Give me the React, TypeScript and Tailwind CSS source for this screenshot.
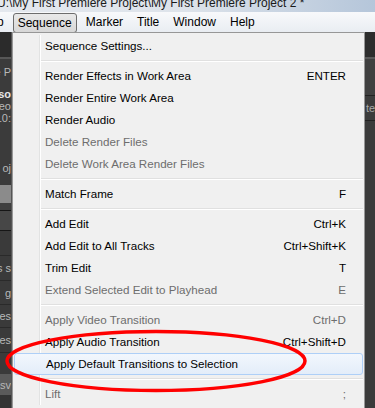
import React from "react";

type Item =
  | { sep: true }
  | { label: string; keys?: string; off?: boolean; hot?: boolean };

const items: Item[] = [
  { label: "Sequence Settings..." },
  { sep: true },
  { label: "Render Effects in Work Area", keys: "ENTER" },
  { label: "Render Entire Work Area" },
  { label: "Render Audio" },
  { label: "Delete Render Files", off: true },
  { label: "Delete Work Area Render Files", off: true },
  { sep: true },
  { label: "Match Frame", keys: "F" },
  { sep: true },
  { label: "Add Edit", keys: "Ctrl+K" },
  { label: "Add Edit to All Tracks", keys: "Ctrl+Shift+K" },
  { label: "Trim Edit", keys: "T" },
  { label: "Extend Selected Edit to Playhead", keys: "E", off: true },
  { sep: true },
  { label: "Apply Video Transition", keys: "Ctrl+D", off: true },
  { label: "Apply Audio Transition", keys: "Ctrl+Shift+D" },
  { label: "Apply Default Transitions to Selection", hot: true },
  { sep: true },
  { label: "Lift", keys: ";", off: true },
];

const menuBar = ["Sequence", "Marker", "Title", "Window", "Help"];

const Clip = ({ text, bold }: { text: string; bold?: boolean }) => (
  <div
    className={`flex justify-end whitespace-nowrap leading-[12px] h-[12px] text-[11px] ${
      bold ? "font-bold text-[#e6e6e6]" : "text-[#b8b8b8]"
    }`}
  >
    {text}
  </div>
);

const LeftStrip = () => (
  <div className="w-[12px] shrink-0 flex flex-col overflow-hidden bg-[#3a3a3a] border-r border-[#555]">
    <div className="h-[25px] bg-[#2b2b2b]" />
    <div className="h-[2px] bg-[#575757]" />
    <div className="h-[126px] bg-[#3b3b3b] flex flex-col pt-[7px]">
      <Clip text="e P" />
      <div className="h-[10px]" />
      <Clip text="so" bold />
      <Clip text="eo" />
      <Clip text="10:" />
      <div className="h-[38px]" />
      <Clip text="oj" />
    </div>
    <div className="h-[18px] bg-[#8b8b8b]" />
    <div className="h-[7px] bg-[#3f3f3f]" />
    <div className="h-[1px] bg-[#161616]" />
    <div className="h-[19px] bg-[#474747]" />
    <div className="h-[1px] bg-[#161616]" />
    <div className="h-[24px] bg-[#3a3a3a]" />
    <div className="h-[1px] bg-[#2a2a2a]" />
    <div className="h-[24px] bg-[#3a3a3a] flex flex-col justify-center">
      <Clip text="s s" />
    </div>
    <div className="h-[1px] bg-[#2a2a2a]" />
    <div className="h-[23px] bg-[#3a3a3a] flex flex-col justify-center">
      <Clip text="g" />
    </div>
    <div className="h-[1px] bg-[#2a2a2a]" />
    <div className="h-[22px] bg-[#3a3a3a] flex flex-col justify-center">
      <Clip text="es" />
    </div>
    <div className="h-[1px] bg-[#2a2a2a]" />
    <div className="h-[24px] bg-[#3a3a3a] flex flex-col justify-center">
      <Clip text="es" />
    </div>
    <div className="h-[1px] bg-[#2a2a2a]" />
    <div className="h-[21px] bg-[#3a3a3a]" />
    <div className="h-[21px] bg-[#5a5a5a] flex flex-col justify-center">
      <Clip text="Lsv" />
    </div>
    <div className="flex-1 bg-[#333]" />
  </div>
);

const RightStrip = () => (
  <div className="flex-1 flex flex-col overflow-hidden bg-[#3a3a3a]">
    <div className="h-[25px] bg-[#2d2d2d]" />
    <div className="h-[2px] bg-[#595959]" />
    <div className="h-[36px] bg-[#404040]" />
    <div className="h-[1px] bg-[#222]" />
    <div className="h-[24px] bg-[#3c3c3c] flex items-center whitespace-nowrap text-[11px] text-[#a8a8a8] leading-[12px] pl-[1px]">
      te
    </div>
    <div className="h-[1px] bg-[#222]" />
    <div className="flex-1 bg-[#3b3b3b]" />
  </div>
);

const Row = ({ item }: { item: Item }) => {
  if ("sep" in item) {
    return (
      <div className="h-[8px] flex">
        <div className="w-[26px] border-r border-[#e2e3e3]" />
        <div className="flex-1 flex flex-col justify-center border-l border-white">
          <div className="h-[1px] bg-[#e0e0e0]" />
          <div className="h-[1px] bg-white" />
        </div>
      </div>
    );
  }
  if (item.hot) {
    return (
      <div className="h-[22px] flex items-center rounded-[3px] border border-[#aecff7] bg-gradient-to-b from-[#f2f7fd] to-[#e3edf9] pl-[31px] text-black">
        {item.label}
      </div>
    );
  }
  return (
    <div className={`h-[22px] flex ${item.off ? "text-[#6d6d6d]" : "text-black"}`}>
      <div className="w-[26px] border-r border-[#e2e3e3]" />
      <div className="flex-1 flex items-center justify-between border-l border-white pl-[4px] pr-[17px]">
        <span>{item.label}</span>
        <span>{item.keys}</span>
      </div>
    </div>
  );
};

export default function App() {
  return (
    <div
      className="relative w-[375px] h-[408px] overflow-hidden flex flex-col bg-[#3a3a3a] text-[11.6px]"
      style={{ fontFamily: '"Liberation Sans", Arial, sans-serif' }}
    >
      <div className="h-[12px] shrink-0 overflow-hidden bg-gradient-to-r from-[#e4e8ee] via-[#dde3ea] to-[#b5c6da]">
        <div className="-mt-[5px] -ml-[3px] whitespace-nowrap text-[12px] leading-[16px] text-[#1a1a1a]">
          U:\My First Premiere Project\My First Premiere Project 2 *
        </div>
      </div>
      <div className="h-[20px] shrink-0 flex items-center gap-[4px] bg-gradient-to-b from-[#f8f9fb] to-[#e9edf2] text-[12px] text-black">
        <div className="-ml-[22px] px-[5px]">Clip</div>
        {menuBar.map((m) =>
          m === "Sequence" ? (
            <div
              key={m}
              className="h-[20px] mt-[1px] flex items-center px-[4px] rounded-[3px] border border-[#6d6d6d] bg-gradient-to-b from-[#e9e9e9] to-[#d7d7d7]"
            >
              {m}
            </div>
          ) : (
            <div key={m} className="px-[5px]">
              {m}
            </div>
          )
        )}
      </div>
      <div className="flex-1 flex">
        <LeftStrip />
        <div className="w-[353px] shrink-0 border border-[#979797] bg-[#f0f0f0] pt-[2px] px-[1px] -mb-[4px]">
          {items.map((it, i) => (
            <Row key={i} item={it} />
          ))}
        </div>
        <RightStrip />
      </div>
      <svg
        className="absolute inset-0 pointer-events-none"
        width="375"
        height="408"
        viewBox="0 0 375 408"
      >
        <ellipse
          cx="156"
          cy="361"
          rx="149"
          ry="29.5"
          fill="none"
          stroke="#f00"
          strokeWidth="3.5"
        />
      </svg>
    </div>
  );
}
